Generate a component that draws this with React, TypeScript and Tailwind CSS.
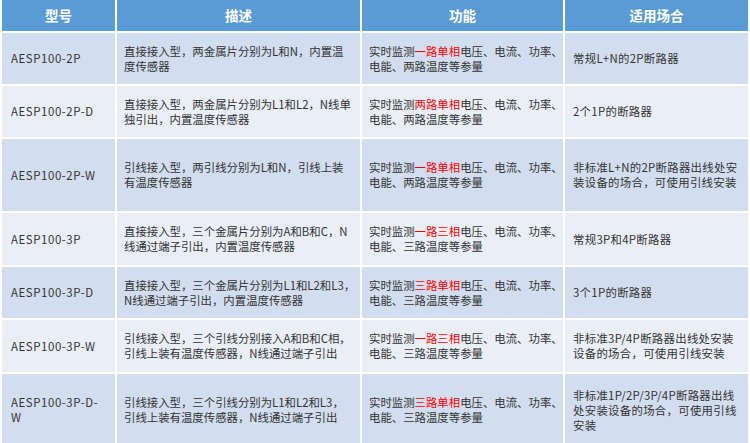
import React from "react";

type Row = {
  model: string[];
  desc: string[];
  pre: string;
  red: string;
  line2: string;
  use: string[];
};

const rows: Row[] = [
  {
    model: ["AESP100-2P"],
    desc: ["直接接入型，两金属片分别为L和N，内置温", "度传感器"],
    pre: "实时监测",
    red: "一路单相",
    line2: "电能、两路温度等参量",
    use: ["常规L+N的2P断路器"],
  },
  {
    model: ["AESP100-2P-D"],
    desc: ["直接接入型，两金属片分别为L1和L2，N线单", "独引出，内置温度传感器"],
    pre: "实时监测",
    red: "两路单相",
    line2: "电能、两路温度等参量",
    use: ["2个1P的断路器"],
  },
  {
    model: ["AESP100-2P-W"],
    desc: ["引线接入型，两引线分别为L和N，引线上装", "有温度传感器"],
    pre: "实时监测",
    red: "一路单相",
    line2: "电能、两路温度等参量",
    use: ["非标准L+N的2P断路器出线处安", "装设备的场合，可使用引线安装"],
  },
  {
    model: ["AESP100-3P"],
    desc: ["直接接入型，三个金属片分别为A和B和C，N", "线通过端子引出，内置温度传感器"],
    pre: "实时监测",
    red: "一路三相",
    line2: "电能、三路温度等参量",
    use: ["常规3P和4P断路器"],
  },
  {
    model: ["AESP100-3P-D"],
    desc: ["直接接入型，三个金属片分别为L1和L2和L3，", "N线通过端子引出，内置温度传感器"],
    pre: "实时监测",
    red: "三路单相",
    line2: "电能、三路温度等参量",
    use: ["3个1P的断路器"],
  },
  {
    model: ["AESP100-3P-W"],
    desc: ["引线接入型，三个引线分别接入A和B和C相，", "引线上装有温度传感器，N线通过端子引出"],
    pre: "实时监测",
    red: "一路三相",
    line2: "电能、三路温度等参量",
    use: ["非标准3P/4P断路器出线处安装", "设备的场合，可使用引线安装"],
  },
  {
    model: ["AESP100-3P-D-", "W"],
    desc: ["引线接入型，三个引线分别为L1和L2和L3，", "引线上装有温度传感器，N线通过端子引出"],
    pre: "实时监测",
    red: "三路单相",
    line2: "电能、三路温度等参量",
    use: ["非标准1P/2P/3P/4P断路器出线", "处安装设备的场合，可使用引线", "安装"],
  },
];

const font = {
  fontFamily: '"Noto Sans CJK SC", "Noto Sans", sans-serif',
};

function Lines({ lines }: { lines: string[] }) {
  return (
    <div className="whitespace-nowrap">
      {lines.map((l, i) => (
        <div key={i}>{l}</div>
      ))}
    </div>
  );
}

export default function App() {
  const headers = ["型号", "描述", "功能", "适用场合"];
  return (
    <div className="w-[750px] h-[443px] overflow-hidden bg-white" style={font}>
      <div className="px-[2px]">
        <div className="grid grid-cols-[113px_243px_201px_183px] grid-rows-[31px_51px_51px_72px_52px_51px_52px_72px] gap-[2px] text-[11.4px] leading-[15px] text-[#333333]">
          {headers.map((h) => (
            <div
              key={h}
              className="flex items-center justify-center bg-[#5b9bd5] text-white font-bold text-[13.5px]"
            >
              {h}
            </div>
          ))}
          {rows.map((r, i) => {
            const bg = i % 2 === 0 ? "bg-[#d2deef]" : "bg-[#eaeff7]";
            return (
              <React.Fragment key={i}>
                <div className={`flex items-center pl-[9px] tracking-[0.6px] ${bg}`}>
                  <Lines lines={r.model} />
                </div>
                <div className={`flex items-center pl-[7px] ${bg}`}>
                  <Lines lines={r.desc} />
                </div>
                <div className={`flex items-center pl-[7px] ${bg}`}>
                  <div className="whitespace-nowrap">
                    <div>
                      {r.pre}
                      <span className="text-[#ff0000]">{r.red}</span>
                      电压、电流、功率、
                    </div>
                    <div>{r.line2}</div>
                  </div>
                </div>
                <div className={`flex items-center pl-[8px] tracking-[0.3px] ${bg}`}>
                  <Lines lines={r.use} />
                </div>
              </React.Fragment>
            );
          })}
        </div>
      </div>
    </div>
  );
}
